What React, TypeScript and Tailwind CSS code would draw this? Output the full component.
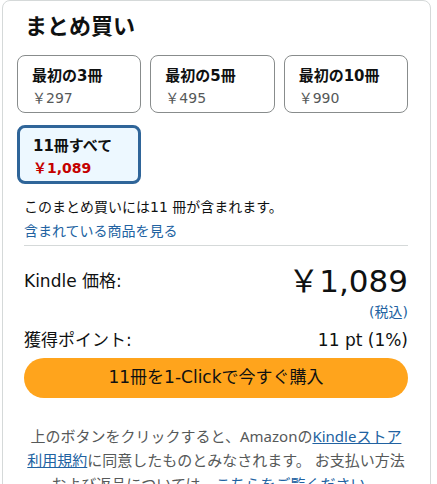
const font = "font-['DejaVu_Sans','Noto_Sans_CJK_JP',sans-serif]";

type Option = { label: string; price: string; selected?: boolean };

const options: Option[] = [
  { label: "最初の3冊", price: "￥297" },
  { label: "最初の5冊", price: "￥495" },
  { label: "最初の10冊", price: "￥990" },
  { label: "11冊すべて", price: "￥1,089", selected: true },
];

function OptionBox({ option }: { option: Option }) {
  if (option.selected) {
    return (
      <div className="h-[59px] rounded-lg border-[3px] border-[#2f6599] bg-[#edf8ff] px-[13px] pt-[8px]">
        <div className="text-[15px] leading-[20px] font-bold text-[#0f1111]">{option.label}</div>
        <div className="mt-[2px] text-[14px] leading-[20px] font-bold text-[#c40000]">{option.price}</div>
      </div>
    );
  }
  return (
    <div className="h-[58px] rounded-lg border border-[#888c8c] bg-white px-[14px] pt-[10px]">
      <div className="text-[15px] leading-[20px] font-bold text-[#0f1111]">{option.label}</div>
      <div className="mt-[2px] text-[14px] leading-[20px] text-[#565959]">{option.price}</div>
    </div>
  );
}

export default function App() {
  return (
    <div className={`${font} h-[484px] w-[437px] overflow-hidden bg-white text-[#0f1111]`}>
      <div className="ml-[2px] h-[500px] w-[429px] rounded-lg border border-[#d5d9d9] pl-[14px] pr-[22px] pt-[11px]">
        <h2 className="pl-[8px] text-[22px] leading-[30px] font-bold">まとめ買い</h2>

        <div className="mt-[13px] grid grid-cols-3 gap-x-[9px] gap-y-[12px]">
          {options.map((o) => (
            <OptionBox key={o.label} option={o} />
          ))}
        </div>

        <div className="pl-[7px]">
          <p className="mt-[11px] text-[14px] leading-[24px]">このまとめ買いには11 冊が含まれます。</p>
          <a className="block text-[14px] leading-[24px] text-[#2162a1]">含まれている商品を見る</a>
          <div className="mt-[2px] h-px bg-[#d5d9d9]" />

          <div className="mt-[17px] flex items-center justify-between">
            <span className="text-[17px] leading-[24px]">Kindle 価格:</span>
            <span className="text-[31px] leading-[36px]">￥1,089</span>
          </div>
          <div className="mt-[3px] text-right text-[14px] leading-[20px] text-[#2162a1]">(税込)</div>
          <div className="mt-[6px] flex items-center justify-between text-[17px] leading-[24px]">
            <span>獲得ポイント:</span>
            <span>11 pt (1%)</span>
          </div>

          <button className="mt-[6px] flex h-[40px] w-full items-center justify-center rounded-full bg-[#ffa41c] text-[17px] text-[#0f1111]">
            11冊を1-Clickで今すぐ購入
          </button>

          <p className="mt-[26px] text-center font-['Noto_Sans','Noto_Sans_CJK_JP',sans-serif] text-[15px] leading-[24px] text-[#565959]">
            上のボタンをクリックすると、Amazonの<a className="text-[#2162a1] underline">Kindleストア利用規約</a>に同意したものとみなされます。 お支払い方法および返品については、<a className="text-[#2162a1]">こちらをご覧ください</a>。
          </p>
        </div>
      </div>
    </div>
  );
}
